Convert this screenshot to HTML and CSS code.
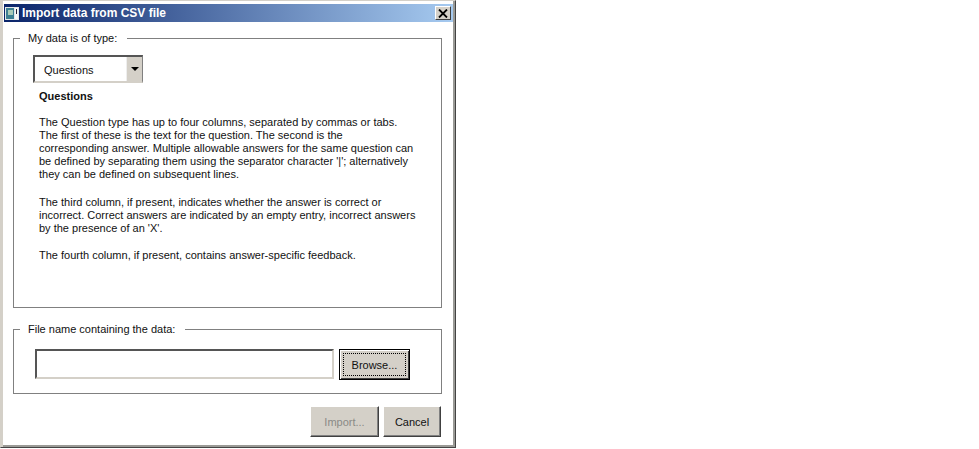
FILE: index.html
```html
<!DOCTYPE html>
<html lang="en">
<head>
    <meta charset="UTF-8">
    <meta name="viewport" content="width=device-width, initial-scale=1.0">
    <title>Import data from CSV file</title>
    <link rel="stylesheet" href="styles.css">
</head>
<body>
    <div class="window">
        <div class="titlebar">
            <svg class="app-icon" width="14" height="13" viewBox="0 0 14 13">
                <rect x="0" y="0" width="14" height="13" fill="#e4e8ea"/>
                <rect x="1" y="1" width="8" height="11" fill="#3d7f92"/>
                <rect x="3" y="3" width="5" height="5" fill="#a9cbb8"/>
                <rect x="10" y="1" width="3" height="11" fill="#f7f7f7"/>
                <rect x="11" y="2" width="1" height="5" fill="#223"/>
            </svg>
            <span class="title">Import data from CSV file</span>
            <div class="close">
                <svg width="10" height="9" viewBox="0 0 10 9">
                    <path d="M1 0.5 L9 8.5 M9 0.5 L1 8.5" stroke="#000" stroke-width="1.8" fill="none"/>
                </svg>
            </div>
        </div>
        <div class="content">
            <fieldset class="group group-type">
                <legend>My data is of type:</legend>
                <div class="select">
                    <span class="select-value">Questions</span>
                    <span class="select-btn"><i class="arrow"></i></span>
                </div>
                <div class="desc">
                    <h4>Questions</h4>
                    <p>The Question type has up to four columns, separated by commas or tabs.<br>The first of these is the text for the question. The second is the<br>corresponding answer. Multiple allowable answers for the same question can<br>be defined by separating them using the separator character '|'; alternatively<br>they can be defined on subsequent lines.</p>
                    <p>The third column, if present, indicates whether the answer is correct or<br>incorrect. Correct answers are indicated by an empty entry, incorrect answers<br>by the presence of an 'X'.</p>
                    <p>The fourth column, if present, contains answer-specific feedback.</p>
                </div>
            </fieldset>
            <fieldset class="group group-file">
                <legend>File name containing the data:</legend>
                <div class="file-row">
                    <input type="text" class="file-input">
                    <button class="btn btn-default"><span>Browse...</span></button>
                </div>
            </fieldset>
            <div class="actions">
                <button class="btn btn-import" disabled>Import...</button>
                <button class="btn btn-cancel">Cancel</button>
            </div>
        </div>
    </div>
</body>
</html>
```
FILE: styles.css
```css
* {
    margin: 0;
    padding: 0;
    box-sizing: border-box;
}
body {
    background: #fff;
    font-family: "Liberation Sans", Arial, sans-serif;
    font-size: 11px;
    color: #111;
}
.window {
    width: 456px;
    height: 448px;
    padding: 3px 2px 2px 3px;
    background: #fff;
    border-top: 1px solid #d4d0c8;
    border-left: 1px solid #d4d0c8;
    border-right: 1px solid #444;
    border-bottom: 1px solid #444;
    box-shadow: inset 2px 0 0 #d4d0c8, inset -2px 0 0 #9a9a96, inset 0 -2px 0 #9a9a96;
    display: flex;
    flex-direction: column;
}
.titlebar {
    height: 18px;
    flex: none;
    display: flex;
    align-items: center;
    padding: 0 2px 0 1px;
    background: linear-gradient(90deg, #0a246a, #a6caf0);
    color: #fff;
}
.app-icon {
    flex: none;
}
.title {
    margin-left: 3px;
    font-size: 12px;
    font-weight: bold;
    flex: 1;
}
.close {
    width: 16px;
    height: 14px;
    background: #d4d0c8;
    border: 1px solid;
    border-color: #fff #404040 #404040 #fff;
    display: flex;
    align-items: center;
    justify-content: center;
}
.content {
    flex: 1;
    padding: 8px 11px 0 9px;
    display: flex;
    flex-direction: column;
}
.group {
    border: 1px solid #808080;
    padding: 0 0 0 19px;
}
.group legend {
    margin-left: -13px;
    padding: 0 10px 0 8px;
    line-height: 16px;
}
.group-type {
    padding-top: 9px;
    height: 278px;
}
.select {
    width: 110px;
    height: 28px;
    display: flex;
    border: 2px solid;
    border-color: #555 #808080 #d4d0c8 #555;
    border-right-width: 1px;
    background: #fff;
}
.select-value {
    flex: 1;
    padding-left: 9px;
    line-height: 26px;
}
.select-btn {
    width: 16px;
    background: #d4d0c8;
    border-left: 1px solid #eee;
    display: flex;
    align-items: center;
    justify-content: center;
}
.arrow {
    width: 0;
    height: 0;
    border-left: 4px solid transparent;
    border-right: 4px solid transparent;
    border-top: 4px solid #000;
}
.desc {
    margin-left: 6px;
    line-height: 13px;
}
.desc h4 {
    font-size: 11px;
    margin-top: 6px;
    line-height: 15px;
    margin-bottom: 12px;
}
.desc p {
    margin-bottom: 14.5px;
}
.group-file {
    height: 73px;
    margin-top: 13px;
    padding-left: 21px;
}
.group-file legend {
    margin-left: -15px;
}
.file-row {
    display: flex;
    gap: 5px;
    margin-top: 12px;
}
.file-input {
    width: 299px;
    height: 30px;
    border: 2px solid;
    border-color: #555 #d4d0c8 #d4d0c8 #555;
    background: #fff;
    outline: none;
}
.btn {
    font-family: inherit;
    font-size: 11px;
    color: #111;
    background: #d4d0c8;
    border: 1px solid;
    border-color: #fff #404040 #404040 #fff;
    box-shadow: inset -1px -1px 0 #808080;
}
.btn-default {
    width: 71px;
    height: 31px;
    border: 1px solid #000;
    padding: 3px;
    box-shadow: inset 1px 1px 0 #fff, inset -1px -1px 0 #404040;
}
.btn-default span {
    display: flex;
    height: 100%;
    align-items: center;
    justify-content: center;
    border: 1px dotted #000;
}
.actions {
    display: flex;
    justify-content: flex-end;
    gap: 4px;
    margin-top: 12px;
    padding-right: 1px;
}
.btn-import {
    width: 69px;
    height: 31px;
    color: #8a8a86;
}
.btn-cancel {
    width: 58px;
    height: 31px;
}
```
